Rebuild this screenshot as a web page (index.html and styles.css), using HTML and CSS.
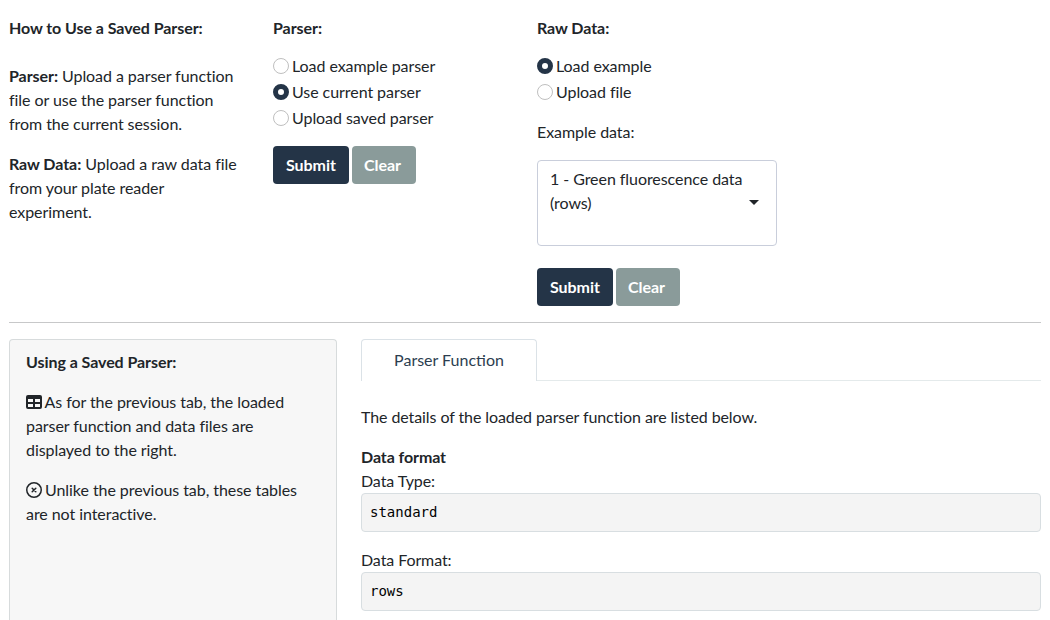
FILE: index.html
```html
<!DOCTYPE html>
<html lang="en">
<head>
<meta charset="utf-8">
<title>Use Saved Parser</title>
<link rel="stylesheet" href="styles.css">
</head>
<body>
<div class="page">
  <section class="top">
    <div class="col intro">
      <p class="head"><b>How to Use a Saved Parser:</b></p>
      <p><b>Parser:</b> Upload a parser function<br>file or use the parser function<br>from the current session.</p>
      <p><b>Raw Data:</b> Upload a raw data file<br>from your plate reader<br>experiment.</p>
    </div>
    <div class="col">
      <p class="head"><b>Parser:</b></p>
      <div class="radios">
        <div class="radio"><i class="dot"></i>Load example parser</div>
        <div class="radio"><i class="dot on"></i>Use current parser</div>
        <div class="radio"><i class="dot"></i>Upload saved parser</div>
      </div>
      <div class="buttons"><button class="btn dark">Submit</button><button class="btn grey">Clear</button></div>
    </div>
    <div class="col">
      <p class="head"><b>Raw Data:</b></p>
      <div class="radios">
        <div class="radio"><i class="dot on"></i>Load example</div>
        <div class="radio"><i class="dot"></i>Upload file</div>
      </div>
      <div class="label">Example data:</div>
      <div class="select"><span>1 - Green fluorescence data<br>(rows)</span><i class="caret"></i></div>
      <div class="buttons"><button class="btn dark">Submit</button><button class="btn grey">Clear</button></div>
    </div>
  </section>
  <hr class="rule">
  <section class="bottom">
    <aside class="side">
      <p><b>Using a Saved Parser:</b></p>
      <p><svg class="icon" viewBox="0 0 16 16"><path fill="currentColor" fill-rule="evenodd" d="M2 1h12a2 2 0 0 1 2 2v10a2 2 0 0 1-2 2H2a2 2 0 0 1-2-2V3a2 2 0 0 1 2-2zM2 5v3h5V5zM9 5v3h5V5zM2 10v3h5v-3zM9 10v3h5v-3z"/></svg> As for the previous tab, the loaded<br>parser function and data files are<br>displayed to the right.</p>
      <p><svg class="icon" viewBox="0 0 16 16" fill="none" stroke="currentColor" stroke-width="1.5" stroke-linecap="round"><circle cx="8" cy="8" r="7.25"/><path d="M6.2 6.2l3.6 3.6M9.8 6.2l-3.6 3.6"/></svg> Unlike the previous tab, these tables<br>are not interactive.</p>
    </aside>
    <main class="main">
      <div class="tabs"><div class="tab">Parser Function</div></div>
      <p class="details">The details of the loaded parser function are listed below.</p>
      <div><b>Data format</b></div>
      <div>Data Type:</div>
      <pre class="value">standard</pre>
      <div>Data Format:</div>
      <pre class="value">rows</pre>
    </main>
  </section>
</div>
</body>
</html>
```
FILE: styles.css
```css
* { box-sizing: border-box; }
body {
  margin: 0;
  background: #fff;
  color: #212529;
  font: 16px/24px Lato, sans-serif;
  letter-spacing: -0.06px;
}
p { margin: 0 0 16px; }
.page {
  display: flex;
  flex-direction: column;
  height: 620px;
  padding: 16px 9px 0;
}
.top { display: flex; flex: none; gap: 24px; height: 306px; }
.col { width: 240px; flex: none; }
.intro .head { margin-bottom: 24px; }
.head { margin-bottom: 14px; }
.radios { display: flex; flex-direction: column; gap: 2px; }
.radio { display: flex; align-items: center; gap: 3px; }
.dot {
  width: 16px;
  height: 16px;
  border: 1px solid #bfbfbf;
  border-radius: 50%;
}
.dot.on { border: 5px solid #243447; }
.buttons { display: flex; gap: 3px; margin-top: 16px; }
.btn {
  height: 38px;
  padding: 0 12px;
  border: 0;
  border-radius: 4px;
  color: #fff;
  font: bold 16px/24px Lato, sans-serif;
  letter-spacing: -0.06px;
  text-align: left;
}
.dark { width: 76px; padding-left: 13px; background: #243447; }
.grey { width: 64px; background: #8a9b9a; }
.label { margin: 16px 0; }
.select {
  display: flex;
  justify-content: space-between;
  height: 86px;
  padding: 6px 17px 0 12px;
  border: 1px solid #c9cedb;
  border-radius: 4px;
}
.select + .buttons { margin-top: 22px; }
.caret {
  margin-top: 33px;
  width: 0;
  height: 0;
  border: 5px solid transparent;
  border-top-color: #212529;
  border-bottom: 0;
}
.rule { flex: none; width: 100%; margin: 0; border: 0; height: 1px; background: #c7c8c9; }
.bottom { display: flex; flex: 1; gap: 24px; padding-top: 16px; }
.side {
  width: 328px;
  flex: none;
  padding: 10px 16px 0;
  background: #f7f7f7;
  border: 1px solid #d7dbdc;
  border-bottom: 0;
  border-radius: 4px 4px 0 0;
}
.icon { width: 16px; height: 16px; vertical-align: -2px; margin-right: -1px; }
.main { flex: 1; letter-spacing: -0.09px; }
.tabs { display: flex; height: 42px; border-bottom: 1px solid #e4eaeb; letter-spacing: 0; }
.tab {
  width: 176px;
  height: 42px;
  padding-top: 8px;
  text-align: center;
  color: #2c3e50;
  background: #fff;
  border: 1px solid #dbe2e7;
  border-bottom: 0;
  border-radius: 4px 4px 0 0;
}
.details { margin: 24px 0 16px; }
.value {
  height: 39px;
  margin: 0 0 16px;
  padding: 6px 8px;
  background: #f4f4f4;
  border: 1px solid #d8dee1;
  border-radius: 4px;
  color: #000;
  font: 14px/24px "DejaVu Sans Mono", monospace;
  letter-spacing: 0;
}
```
